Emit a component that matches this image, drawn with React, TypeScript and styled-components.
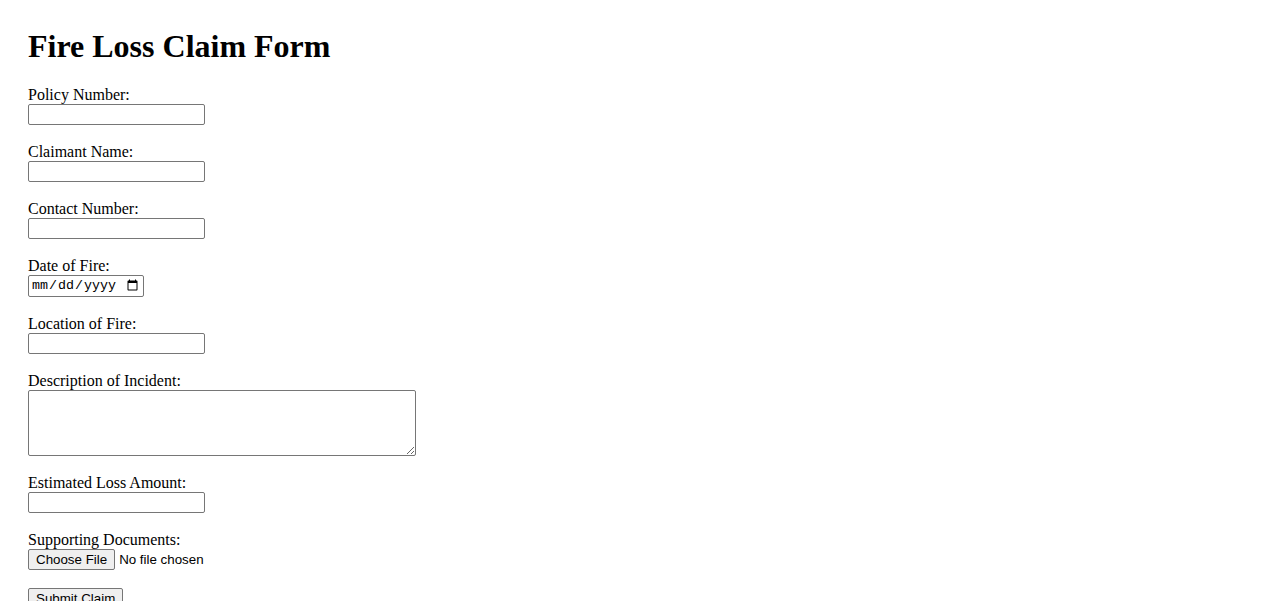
import styled, { createGlobalStyle } from "styled-components";

const GlobalStyle = createGlobalStyle`
  body {
    margin: 0;
    padding: 20px 28px;
    font-family: "Liberation Serif", "Times New Roman", serif;
    font-size: 16px;
    color: #000;
    background: #fff;
  }
`;

const Page = styled.div`
  display: flex;
  flex-direction: column;
`;

const Title = styled.h1`
  font-size: 32px;
  font-weight: 700;
  margin: 8px 0 21px;
`;

const Form = styled.form`
  display: flex;
  flex-direction: column;
  align-items: flex-start;
  gap: 18px;
`;

const Field = styled.div`
  display: flex;
  flex-direction: column;
  align-items: flex-start;
`;

const Label = styled.label`
  line-height: 18px;
  height: 18px;
`;

const TextInput = styled.input`
  box-sizing: border-box;
  width: 177px;
  height: 21px;
  border: 1px solid #767676;
  border-radius: 2px;
  padding: 1px 2px;
  font-family: "Liberation Sans", Arial, sans-serif;
  font-size: 13.33px;
`;

const DateInput = styled.input`
  box-sizing: border-box;
  width: 116px;
  height: 22px;
  border: 1px solid #767676;
  border-radius: 2px;
  padding: 1px 2px;
  font-family: "Liberation Mono", "Courier New", monospace;
  font-size: 13.33px;
`;

const TextArea = styled.textarea`
  box-sizing: border-box;
  width: 388px;
  height: 66px;
  border: 1px solid #767676;
  border-radius: 2px;
  padding: 2px;
  font-family: "Liberation Mono", monospace;
  font-size: 13.33px;
`;

const FileRow = styled.div`
  display: flex;
  align-items: center;
  gap: 4px;
  font-family: "Liberation Sans", Arial, sans-serif;
  font-size: 13.33px;
`;

const Button = styled.button`
  box-sizing: border-box;
  height: 21px;
  padding: 1px 7px;
  background: #efefef;
  border: 1px solid #767676;
  border-radius: 2px;
  font-family: "Liberation Sans", Arial, sans-serif;
  font-size: 13.33px;
  color: #000;
  line-height: 16px;
`;

const HiddenFile = styled.input`
  display: none;
`;

const textFields = [
  { id: "policy", label: "Policy Number:" },
  { id: "claimant", label: "Claimant Name:" },
  { id: "contact", label: "Contact Number:" },
];

export default function App() {
  return (
    <>
      <GlobalStyle />
      <Page>
        <Title>Fire Loss Claim Form</Title>
        <Form onSubmit={(e) => e.preventDefault()}>
          {textFields.map((f) => (
            <Field key={f.id}>
              <Label htmlFor={f.id}>{f.label}</Label>
              <TextInput id={f.id} type="text" />
            </Field>
          ))}
          <Field>
            <Label htmlFor="date">Date of Fire:</Label>
            <DateInput id="date" type="date" />
          </Field>
          <Field>
            <Label htmlFor="location">Location of Fire:</Label>
            <TextInput id="location" type="text" />
          </Field>
          <Field>
            <Label htmlFor="desc">Description of Incident:</Label>
            <TextArea id="desc" />
          </Field>
          <Field>
            <Label htmlFor="amount">Estimated Loss Amount:</Label>
            <TextInput id="amount" type="text" />
          </Field>
          <Field>
            <Label htmlFor="docs">Supporting Documents:</Label>
            <FileRow>
              <Button type="button">Choose File</Button>
              <span>No file chosen</span>
              <HiddenFile id="docs" type="file" />
            </FileRow>
          </Field>
          <Button type="submit">Submit Claim</Button>
        </Form>
      </Page>
    </>
  );
}
